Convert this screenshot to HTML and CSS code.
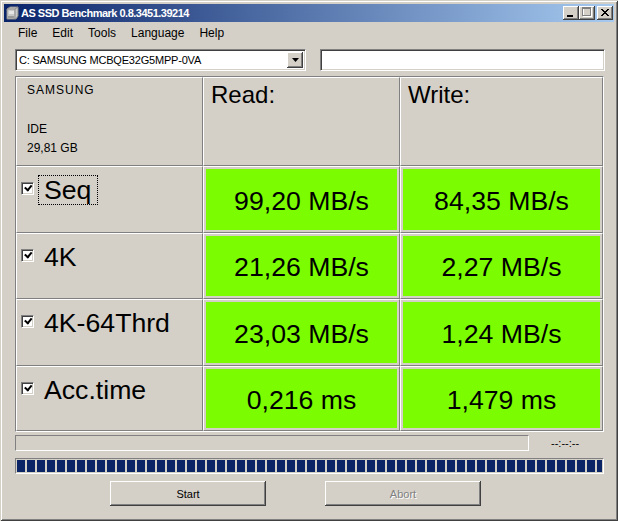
FILE: index.html
```html
<!DOCTYPE html>
<html>
<head>
<meta charset="utf-8">
<link rel="stylesheet" href="styles.css">
</head>
<body>
<div class="window">
  <div class="titlebar">
    <svg class="appicon" width="14" height="14" viewBox="0 0 14 14">
      <path d="M2 3 L5 1 L13 1 L13 10 L11 13 L2 13 Z" fill="#c8c8c8" stroke="#8a8a8a" stroke-width="1"/>
      <path d="M2 3 L10 3 L13 1" fill="none" stroke="#8a8a8a" stroke-width="1"/>
      <path d="M10 3 L10 13" stroke="#8a8a8a" stroke-width="1"/>
      <rect x="3" y="10" width="6" height="2" fill="#9a9a9a"/>
      <rect x="4" y="5" width="5" height="3" fill="#e6e6e6"/>
    </svg>
    <span class="title">AS SSD Benchmark 0.8.3451.39214</span>
    <div class="wbtns">
      <span class="wbtn"><svg width="16" height="14" viewBox="0 0 16 14"><rect x="4" y="9" width="6" height="2" fill="#000"/></svg></span>
      <span class="wbtn"><svg width="16" height="14" viewBox="0 0 16 14"><rect x="4.5" y="2.5" width="8" height="8" fill="none" stroke="#fff"/><rect x="3.5" y="1.5" width="8" height="8" fill="none" stroke="#808080"/><rect x="3" y="1" width="9" height="2" fill="#808080"/></svg></span>
      <span class="wbtn close"><svg width="16" height="14" viewBox="0 0 16 14"><path d="M4 3 L11 10 M5 3 L12 10 M11 3 L4 10 M12 3 L5 10" stroke="#000" stroke-width="1"/></svg></span>
    </div>
  </div>
  <div class="menubar">
    <span class="menu">File</span>
    <span class="menu">Edit</span>
    <span class="menu">Tools</span>
    <span class="menu">Language</span>
    <span class="menu">Help</span>
  </div>
  <div class="content">
    <div class="toprow">
      <div class="combo">
        <span class="combotext">C: SAMSUNG MCBQE32G5MPP-0VA</span>
        <span class="dropbtn"><svg width="7" height="4" viewBox="0 0 7 4"><path d="M0 0 L7 0 L3.5 4 Z" fill="#000"/></svg></span>
      </div>
      <div class="textbox"></div>
    </div>
    <div class="grid">
      <div class="cell info">
        <div class="line caps">SAMSUNG</div>
        <div class="line gapline">IDE</div>
        <div class="line">29,81 GB</div>
      </div>
      <div class="cell head">Read:</div>
      <div class="cell head">Write:</div>

      <div class="cell lab"><span class="chk"></span><span class="label focus">Seq</span></div>
      <div class="cell valcell"><div class="val">99,20 MB/s</div></div>
      <div class="cell valcell"><div class="val">84,35 MB/s</div></div>

      <div class="cell lab"><span class="chk"></span><span class="label">4K</span></div>
      <div class="cell valcell"><div class="val">21,26 MB/s</div></div>
      <div class="cell valcell"><div class="val">2,27 MB/s</div></div>

      <div class="cell lab"><span class="chk"></span><span class="label">4K-64Thrd</span></div>
      <div class="cell valcell"><div class="val">23,03 MB/s</div></div>
      <div class="cell valcell"><div class="val">1,24 MB/s</div></div>

      <div class="cell lab"><span class="chk"></span><span class="label">Acc.time</span></div>
      <div class="cell valcell"><div class="val">0,216 ms</div></div>
      <div class="cell valcell"><div class="val">1,479 ms</div></div>
    </div>
    <div class="progrow">
      <div class="progbox"></div>
      <span class="timer">--:--:--</span>
    </div>
    <div class="blockbar"><div class="blocks"></div></div>
    <div class="btnrow">
      <button class="btn">Start</button>
      <button class="btn disabled">Abort</button>
    </div>
  </div>
</div>
</body>
</html>
```
FILE: styles.css
```css
html, body {
  margin: 0;
  padding: 0;
  background: #d4d0c8;
}
body {
  font-family: "Liberation Sans", Arial, sans-serif;
  color: #000;
}
.window {
  width: 618px;
  height: 521px;
  box-sizing: border-box;
  padding: 4px;
  background: #d4d0c8;
  box-shadow: inset 1px 1px #d4d0c8, inset -1px -1px #404040, inset 2px 2px #fff, inset -2px -2px #808080;
  display: flex;
  flex-direction: column;
}
.titlebar {
  height: 18px;
  background: linear-gradient(to right, #0a246a, #a6caf0);
  display: flex;
  align-items: center;
  padding-left: 1px;
  padding-right: 1px;
}
.appicon {
  display: block;
  margin-right: 2px;
}
.title {
  color: #fff;
  font-weight: bold;
  font-size: 11px;
  letter-spacing: -0.5px;
  white-space: nowrap;
}
.wbtns {
  margin-left: auto;
  display: flex;
}
.wbtn {
  width: 16px;
  height: 14px;
  background: #d4d0c8;
  box-shadow: inset -1px -1px #404040, inset 1px 1px #fff, inset -2px -2px #808080;
  display: block;
}
.wbtn svg { display: block; }
.wbtn.close { margin-left: 2px; }
.menubar {
  height: 22px;
  display: flex;
  align-items: center;
  padding-left: 6.5px;
  font-size: 12px;
}
.menu {
  padding: 0 7.5px;
}
.content {
  padding: 0 10px 0 11px;
  display: flex;
  flex-direction: column;
}
.toprow {
  margin-top: 5px;
  display: flex;
  height: 22px;
}
.combo {
  width: 291px;
  box-sizing: border-box;
  background: #fff;
  border: 1px solid;
  border-color: #808080 #fff #fff #808080;
  box-shadow: inset 1px 1px #404040, inset -1px -1px #d4d0c8;
  display: flex;
  align-items: center;
  padding: 2px;
}
.combotext {
  flex: 1;
  font-size: 11px;
  letter-spacing: -0.2px;
  padding-left: 1px;
  white-space: nowrap;
}
.dropbtn {
  width: 16px;
  height: 16px;
  background: #d4d0c8;
  box-shadow: inset -1px -1px #404040, inset 1px 1px #fff, inset -2px -2px #808080;
  display: flex;
  align-items: center;
  justify-content: center;
}
.dropbtn svg { display: block; }
.textbox {
  flex: 1;
  margin-left: 14px;
  margin-right: -1px;
  box-sizing: border-box;
  background: #fff;
  border: 1px solid;
  border-color: #808080 #fff #fff #808080;
  box-shadow: inset 1px 1px #404040, inset -1px -1px #d4d0c8;
}
.grid {
  margin-top: 5px;
  display: grid;
  grid-template-columns: 187px 197px 203px;
  grid-template-rows: 89px 67px 66px 67px 65px;
  border: 1px solid;
  border-color: #808080 #fff #fff #808080;
}
.cell {
  box-sizing: border-box;
  border-top: 1px solid #fff;
  border-left: 1px solid #fff;
  border-right: 1px solid #808080;
  border-bottom: 1px solid #808080;
}
.info {
  padding: 3px 0 0 10px;
  font-size: 12px;
}
.info .line {
  line-height: 19px;
  white-space: nowrap;
}
.info .caps {
  letter-spacing: 1px;
}
.info .gapline {
  margin-top: 20px;
}
.head {
  padding: 3px 0 0 7px;
  font-size: 24px;
}
.lab {
  display: flex;
  align-items: flex-start;
  padding: 8px 0 0 4px;
}
.chk {
  width: 13px;
  height: 13px;
  box-sizing: border-box;
  margin-top: 7px;
  background: #fff;
  border: 1px solid;
  border-color: #808080 #fff #fff #808080;
  box-shadow: inset 1px 1px #404040, inset -1px -1px #d4d0c8;
  position: relative;
}
.chk::after {
  content: "";
  position: absolute;
  left: 2px;
  top: 1px;
  width: 5px;
  height: 3px;
  border-left: 2px solid #000;
  border-bottom: 2px solid #000;
  transform: rotate(-50deg) translate(0px, 1px);
  transform-origin: 50% 50%;
}
.label {
  margin-left: 4px;
  padding: 0 6px 0 5px;
  border: 1px dotted transparent;
  font-size: 26.67px;
  line-height: 28px;
  white-space: nowrap;
}
.label.focus {
  border-color: #000;
}
.valcell {
  padding: 2px;
  display: flex;
}
.val {
  flex: 1;
  background: #7cfc00;
  display: flex;
  align-items: center;
  justify-content: center;
  font-size: 26.67px;
  padding-top: 3px;
  white-space: nowrap;
}
.progrow {
  margin-top: 3px;
  display: flex;
  align-items: center;
  height: 16px;
}
.progbox {
  width: 514px;
  height: 16px;
  box-sizing: border-box;
  border: 1px solid;
  border-color: #808080 #fff #fff #808080;
}
.timer {
  margin-left: 22px;
  font-size: 11px;
}
.blockbar {
  margin-top: 7px;
  height: 16px;
  box-sizing: border-box;
  border: 1px solid;
  border-color: #808080 #fff #fff #808080;
  padding: 1px 1px 1px 0.7px;
}
.blocks {
  height: 100%;
  background: repeating-linear-gradient(to right, #0b2465 0, #0b2465 8px, #d4d0c8 8px, #d4d0c8 10px);
}
.btnrow {
  margin-top: 7px;
  display: flex;
  padding-left: 95px;
}
.btn {
  width: 156px;
  height: 25px;
  margin: 0;
  padding: 0;
  border: none;
  background: #d4d0c8;
  box-shadow: inset -1px -1px #404040, inset 1px 1px #fff, inset -2px -2px #808080;
  font-family: "Liberation Sans", Arial, sans-serif;
  font-size: 11px;
  color: #000;
}
.btn.disabled {
  margin-left: 59px;
  color: #808080;
  text-shadow: 1px 1px 0 #fff;
}
```
